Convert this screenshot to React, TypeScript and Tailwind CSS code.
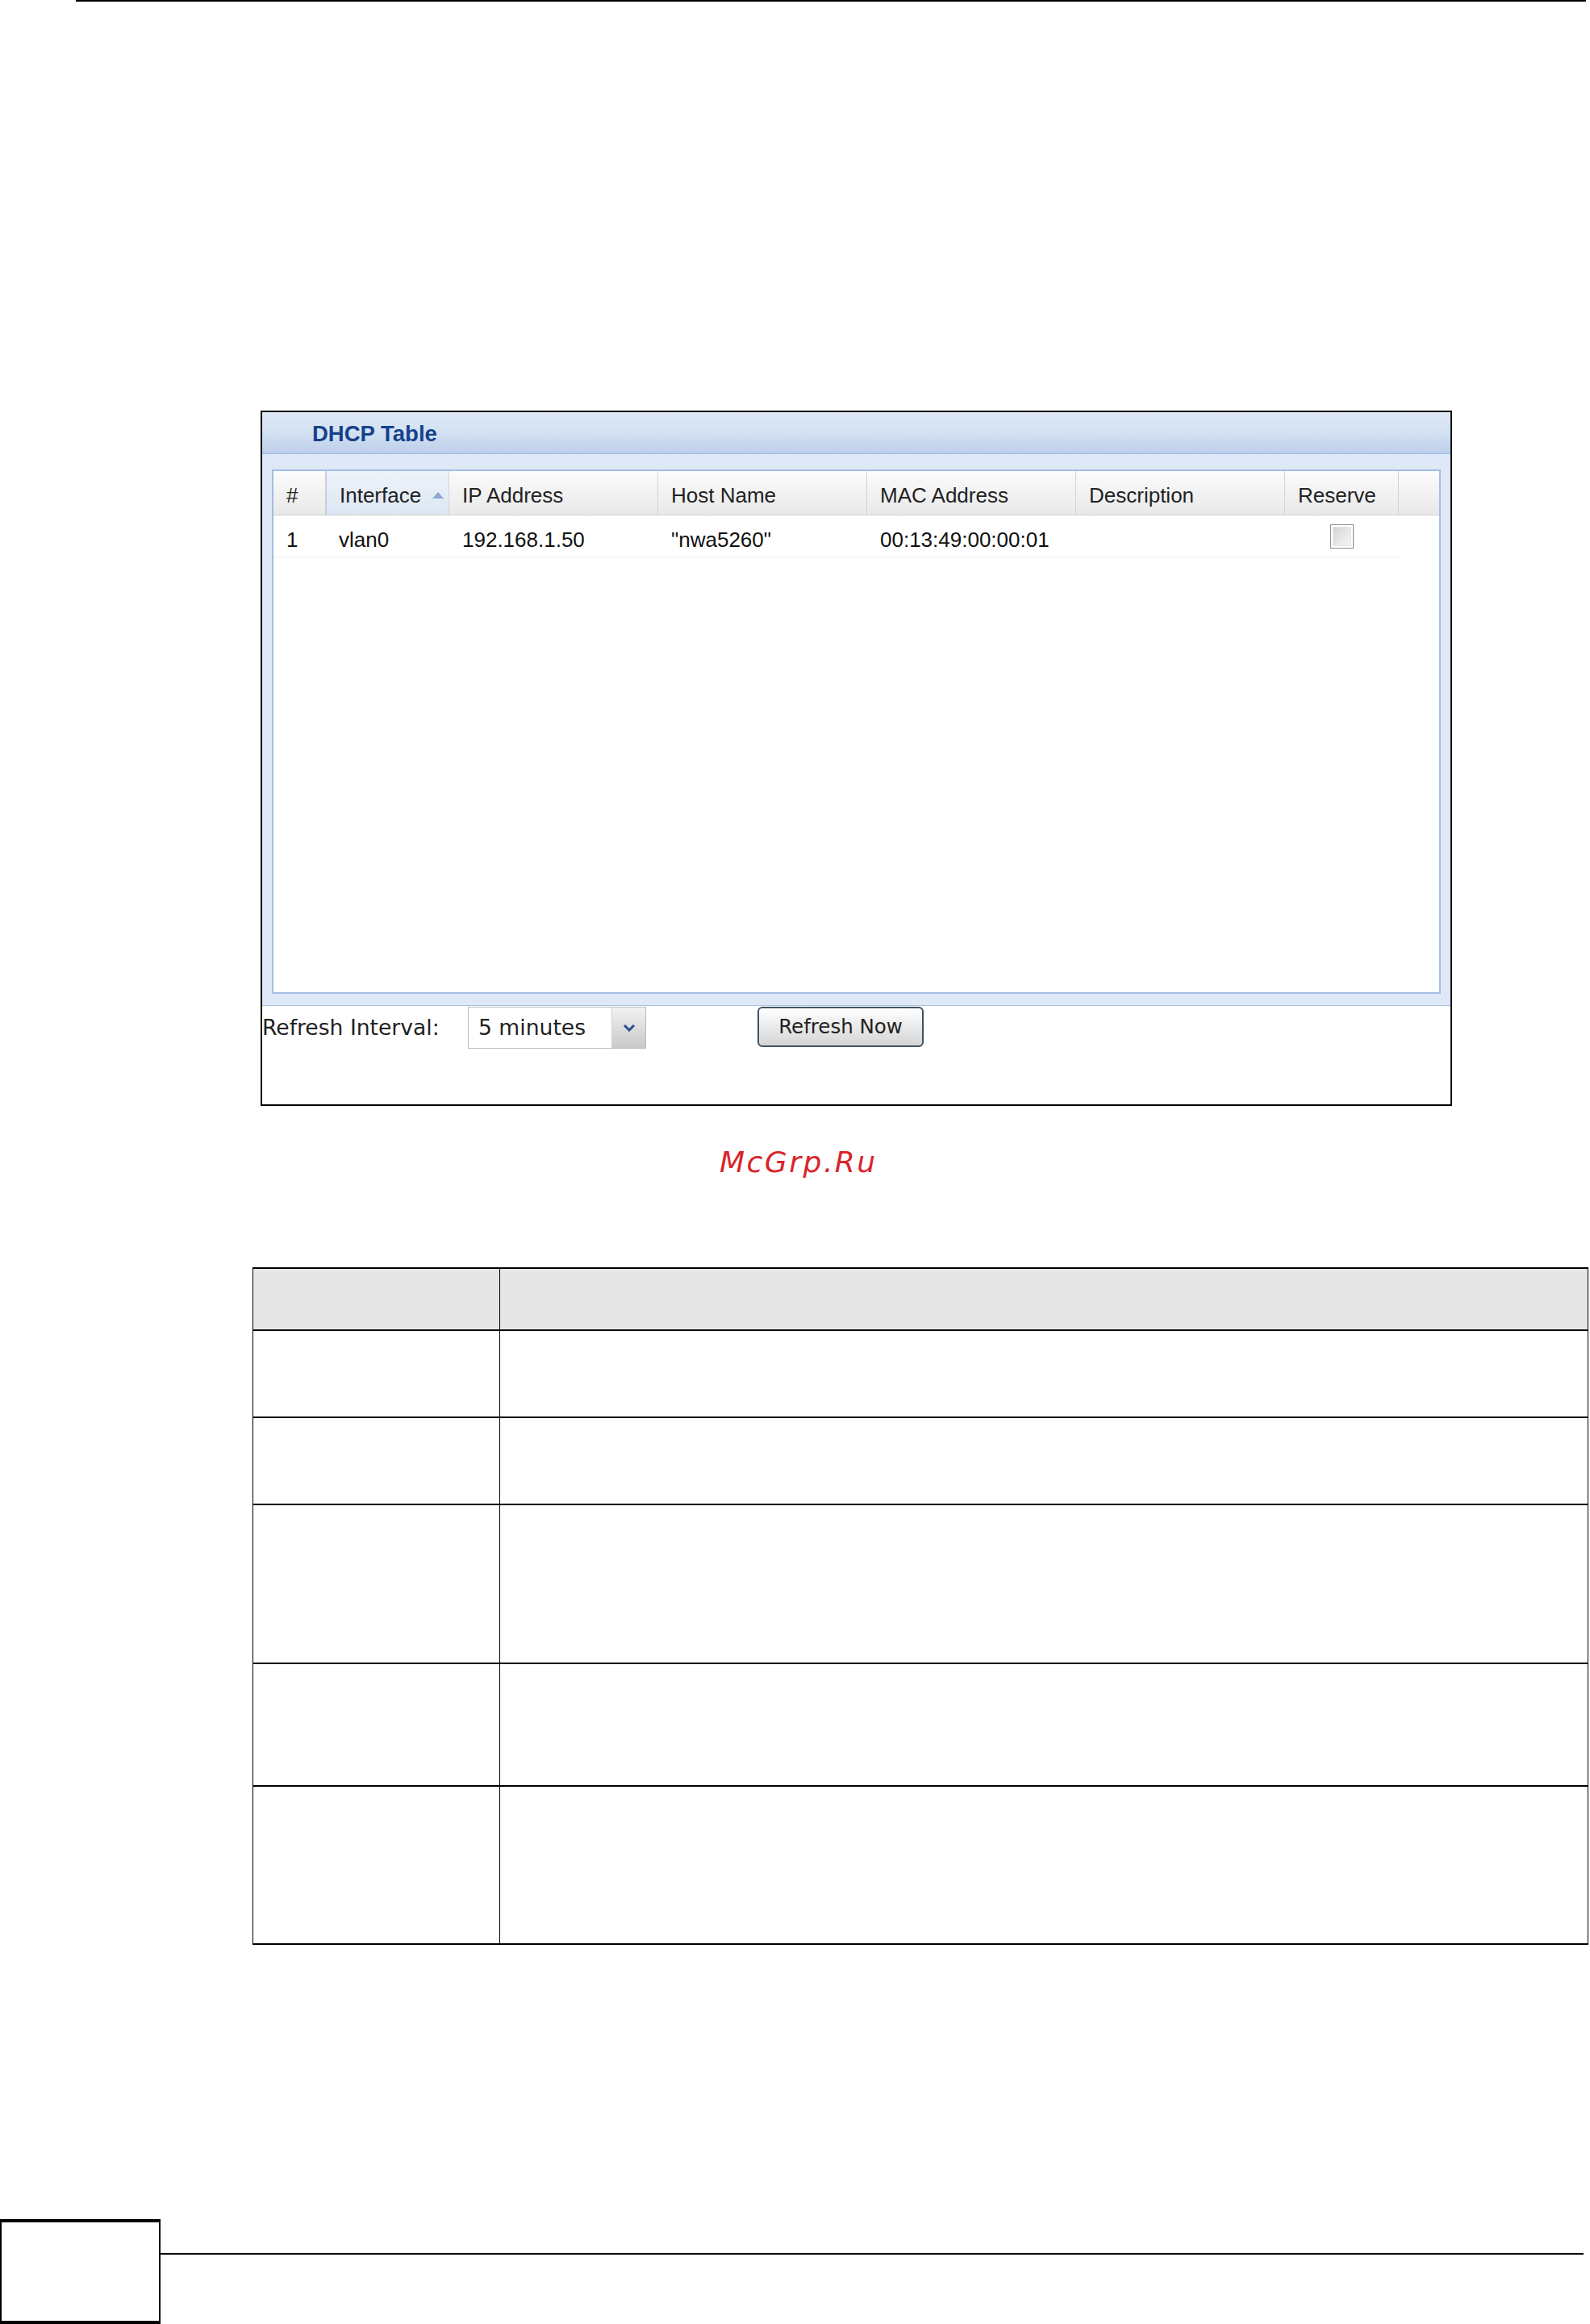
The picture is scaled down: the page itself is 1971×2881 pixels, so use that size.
import React from "react";

const columns = [
  { key: "num", label: "#", width: "w-[65px]", value: "1" },
  { key: "iface", label: "Interface", width: "w-[153px]", value: "vlan0", sorted: true },
  { key: "ip", label: "IP Address", width: "w-[259px]", value: "192.168.1.50" },
  { key: "host", label: "Host Name", width: "w-[259px]", value: "\"nwa5260\"" },
  { key: "mac", label: "MAC Address", width: "w-[259px]", value: "00:13:49:00:00:01" },
  { key: "desc", label: "Description", width: "w-[259px]", value: "" },
  { key: "reserve", label: "Reserve", width: "w-[141px]", value: "" },
];

// row heights of the empty description table under the screenshot
const tableRows = [
  "h-[108px]",
  "h-[108px]",
  "h-[197px]",
  "h-[152px]",
  "h-[196px]",
];

const SortArrow = () => (
  <svg width="14" height="8" viewBox="0 0 14 8" className="ml-[14px]">
    <path d="M0 8 L7 0 L14 8 Z" fill="#8ba8d0" />
  </svg>
);

const Checkbox = () => (
  <div className="w-[29px] h-[30px] border border-[#8c8c8c] p-[2px] bg-white">
    <div className="w-full h-full bg-linear-to-br from-[#d4d4d4] to-[#f7f7f7] border border-[#e6e6e6]" />
  </div>
);

const DhcpPanel = () => (
  <div className="ml-[323px] mt-[507px] w-[1477px] h-[862px] border-2 border-black flex flex-col bg-white">
    {/* title bar */}
    <div className="h-[52px] shrink-0 flex items-center pl-[62px] pt-[3px] border-b border-[#99bbe8] bg-linear-to-b from-[#dfe9f6] via-[#d3e1f2] to-[#bccfea]">
      <span className="text-[27.5px] font-bold text-[#15428b] leading-none">DHCP Table</span>
    </div>

    {/* grid area */}
    <div className="h-[684px] shrink-0 bg-[#dfe8f6] px-[12px] pt-[19px] pb-[14px] border-b border-[#a9c0df]">
      <div className="h-[650px] border-2 border-[#a3bde3] bg-white flex flex-col">
        <div className="h-[55px] shrink-0 flex border-b border-[#d0d0d0] bg-linear-to-b from-[#fbfbfb] to-[#e9e9e9]">
          {columns.map((col) => (
            <div
              key={col.key}
              className={`${col.width} shrink-0 h-full flex items-center pl-4 pt-[6px] border-r border-[#d3d3d3] text-[26px] text-[#222] ${
                col.sorted ? "bg-linear-to-b from-[#eef3fa] to-[#dce6f3] border-l border-l-[#b9cbe5]" : ""
              }`}
            >
              {col.label}
              {col.sorted && <SortArrow />}
            </div>
          ))}
          <div className="flex-1" />
        </div>

        <div className="h-[52px] w-[1395px] shrink-0 flex border-b border-[#ececec]">
          {columns.map((col) => (
            <div
              key={col.key}
              className={`${col.width} shrink-0 h-full flex items-center text-[26px] text-[#111] ${
                col.key === "reserve" ? "justify-center" : "pl-4 pt-[9px]"
              }`}
            >
              {col.key === "reserve" ? <Checkbox /> : col.value}
            </div>
          ))}
        </div>
      </div>
    </div>

    {/* refresh controls */}
    <div className="flex items-start pt-[1px] [font-family:'DejaVu_Sans',sans-serif]">
      <div className="w-[255px] h-[52px] flex items-center text-[26.6px] text-[#222]">
        Refresh Interval:
      </div>
      <div className="w-[221px] h-[52px] flex border border-[#b8bcc6] bg-white">
        <div className="flex-1 flex items-center pl-[12px] text-[26.6px] text-[#222]">5 minutes</div>
        <div className="w-[42px] h-full flex items-center justify-center bg-linear-to-b from-[#f2f2f2] to-[#c9c9c9] border-l border-[#d0d0d0]">
          <svg width="16" height="10" viewBox="0 0 16 10">
            <path d="M2 2 L8 8 L14 2" fill="none" stroke="#2d4f8c" strokeWidth="3" />
          </svg>
        </div>
      </div>
      <button className="ml-[138px] w-[206px] h-[50px] rounded-[6px] border-2 border-[#3f5264] bg-linear-to-b from-[#ffffff] to-[#d5d5d5] text-[24.5px] text-[#222] flex items-center justify-center">
        Refresh Now
      </button>
    </div>
  </div>
);

const App: React.FC = () => {
  return (
    <div className="w-[1971px] h-[2881px] bg-white overflow-hidden flex flex-col [font-family:'Liberation_Sans',Arial,sans-serif]">
      {/* header rule */}
      <div className="ml-[94px] w-[1872px] h-[2px] shrink-0 bg-black" />

      <DhcpPanel />

      {/* watermark */}
      <div className="mt-[52px] ml-[892px] h-[36px] leading-[36px] text-[36px] italic text-[#d8262a] tracking-[2.5px] [font-family:'DejaVu_Sans',sans-serif]">
        McGrp.Ru
      </div>

      {/* description table */}
      <div className="mt-[112px] ml-[313px] w-[1656px] border-x border-b-2 border-black shrink-0">
        <div className="h-[77px] flex border-t-2 border-black bg-[#e6e6e6]">
          <div className="w-[306px] border-r border-black" />
          <div className="flex-1" />
        </div>
        {tableRows.map((h, i) => (
          <div key={i} className={`${h} flex border-t-2 border-black`}>
            <div className="w-[306px] border-r border-black" />
            <div className="flex-1" />
          </div>
        ))}
      </div>

      {/* footer */}
      <div className="mt-auto flex items-start shrink-0">
        <div className="w-[199px] h-[130px] border-y-4 border-x-2 border-black" />
        <div className="mt-[42px] w-[1764px] h-[2px] bg-black" />
      </div>
    </div>
  );
};

export default App;
